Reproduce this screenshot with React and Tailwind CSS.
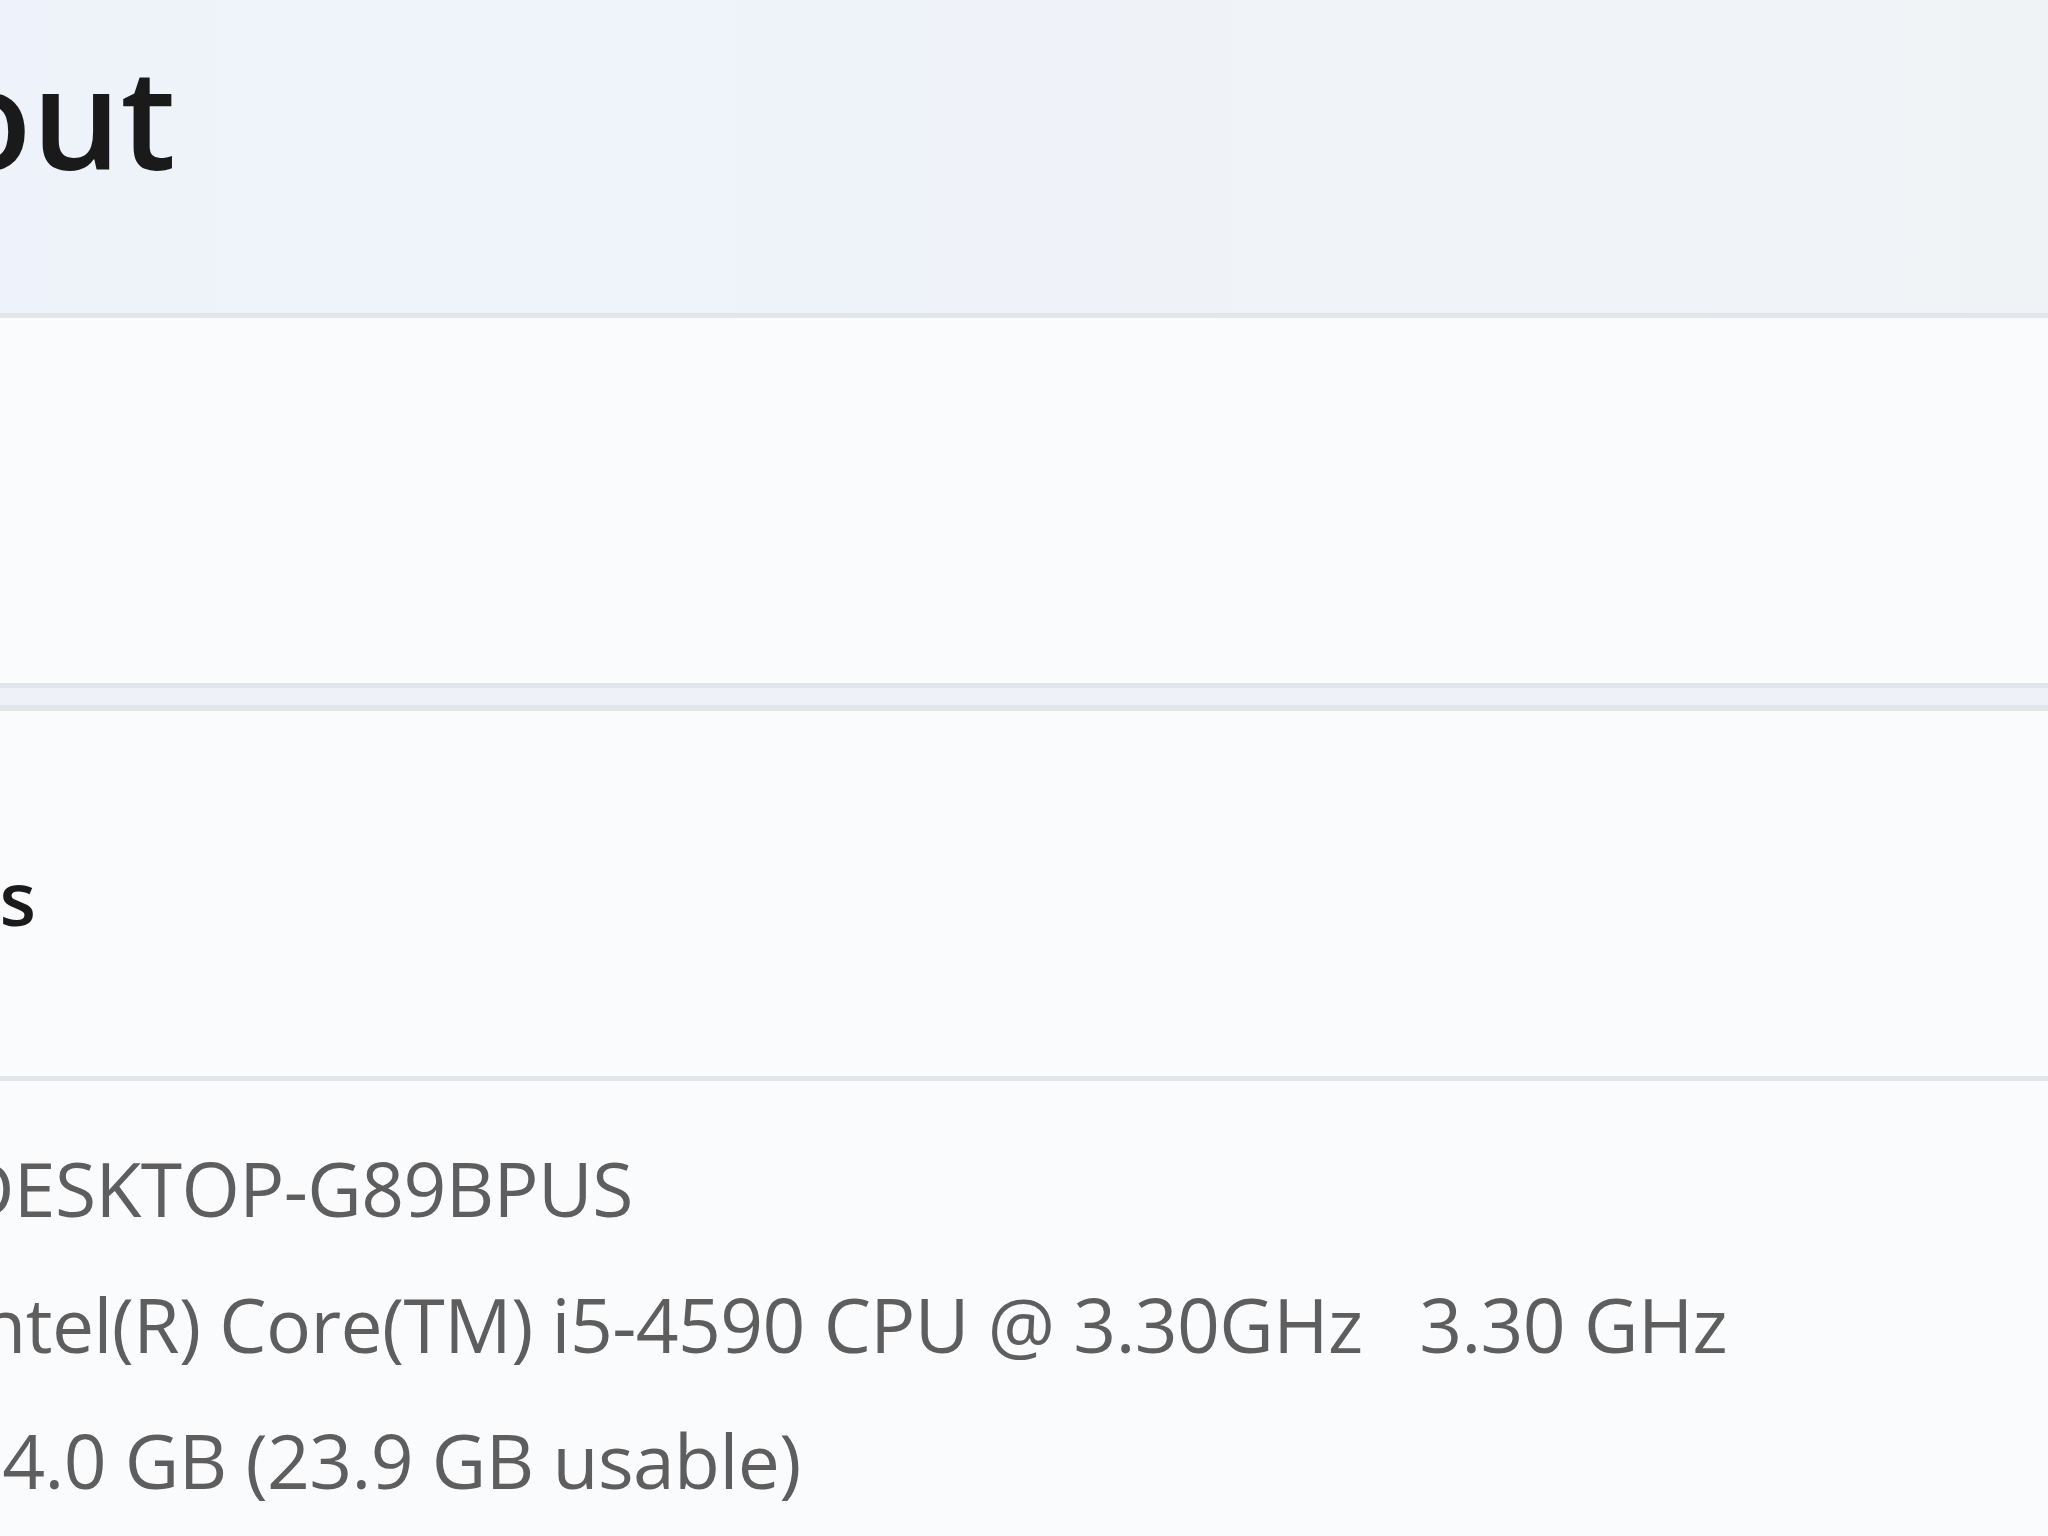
const specs = [
  { label: 'Device name', value: 'DESKTOP-G89BPUS' },
  { label: 'Processor', value: 'Intel(R) Core(TM) i5-4590 CPU @ 3.30GHz   3.30 GHz' },
  { label: 'Installed RAM', value: '24.0 GB (23.9 GB usable)' },
];

const App = () => {
  return (
    <div className="w-[2048px] h-[1536px] overflow-hidden bg-[#fafbfd] font-['Open_Sans','Noto_Sans',sans-serif]">
      {/* Page header */}
      <div className="h-[318px] bg-gradient-to-r from-[#eef3fb] to-[#f0f3f6] border-b-[5px] border-[#e2e6eb] pt-[46px]">
        <div className="w-[176px] flex justify-end whitespace-nowrap">
          <h1 className="text-[140px] leading-none font-semibold text-[#1a1a1a]">About</h1>
        </div>
      </div>

      {/* Device card */}
      <div className="h-[370px] bg-[#fafbfd] border-b-[5px] border-[#e2e6eb]" />

      {/* Gap between cards */}
      <div className="h-[23px] bg-[#eef2f8] border-b-[6px] border-[#e2e6eb]" />

      {/* Specifications card */}
      <div className="bg-[#fafbfd]">
        <div className="h-[370px] border-b-[5px] border-[#e2e6eb] pt-[149px]">
          <div className="w-[36px] flex justify-end whitespace-nowrap">
            <h2 className="text-[75px] leading-none font-semibold text-[#1b1b1b]">Device specifications</h2>
          </div>
        </div>

        <div className="pt-[39px] ml-[-40px] flex flex-col">
          {specs.map(spec => (
            <p
              key={spec.label}
              className="text-[75px] leading-[136px] tracking-[-0.6px] text-[#5e5e5e] whitespace-pre"
            >
              {spec.value}
            </p>
          ))}
        </div>
      </div>
    </div>
  );
};

export default App;
